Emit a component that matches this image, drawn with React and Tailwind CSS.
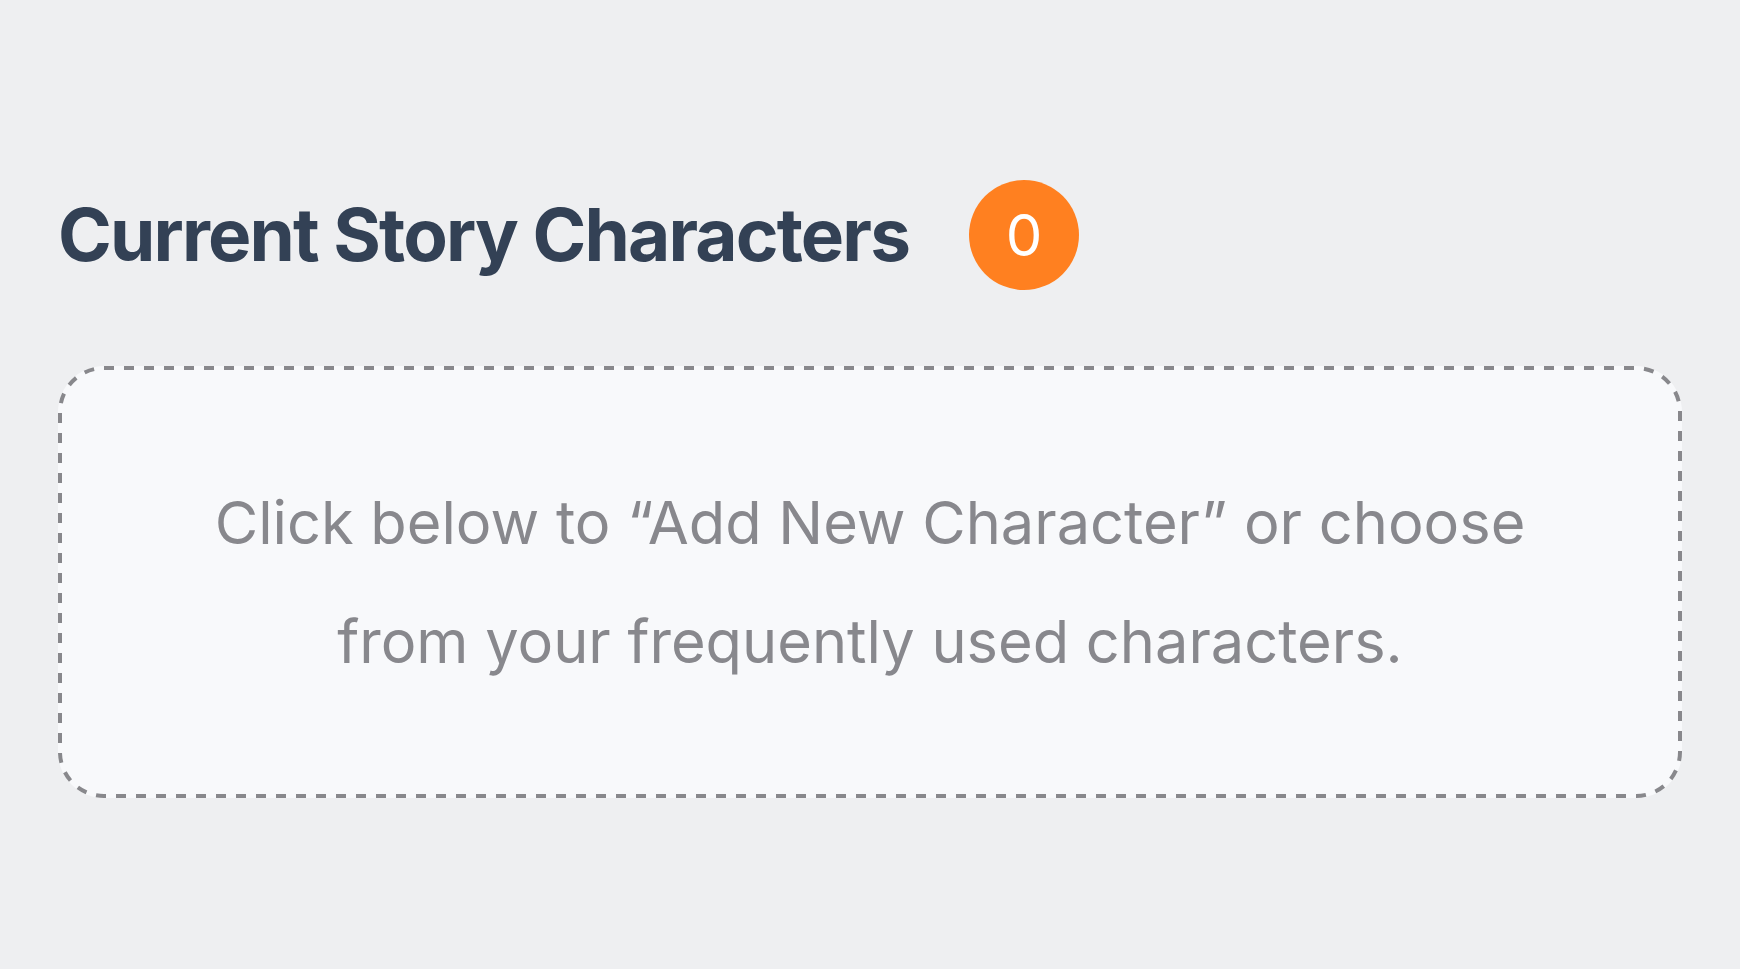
import React from 'react';

const App = () => {
    const count = 0;

    return (
        <div className="min-h-screen bg-[#eeeff1] px-[58px] pt-[180px] font-['Inter','Noto_Sans',sans-serif]">
            {/* header row */}
            <div className="flex items-center gap-[60px] h-[110px]">
                <h1 className="text-[72.8px] leading-none font-bold tracking-tight text-[#334155]">
                    Current Story Characters
                </h1>
                <span className="flex items-center justify-center w-[110px] h-[110px] rounded-full bg-[#ff8020] text-white text-[58px] leading-none">
                    {count}
                </span>
            </div>

            {/* empty state */}
            <div className="relative mt-[76px] h-[432px] flex items-center justify-center rounded-[46px] bg-[#f8f9fb]">
                {/* dashed outline, 10/10 dashes */}
                <svg className="absolute inset-0 w-full h-full pointer-events-none" fill="none">
                    <rect
                        x="2"
                        y="2"
                        rx="44"
                        className="[width:calc(100%-4px)] [height:calc(100%-4px)]"
                        stroke="#88888c"
                        strokeWidth="4"
                        strokeDasharray="10 10"
                    />
                </svg>
                <p className="text-center text-[59.5px] leading-[2] text-[#88888d]">
                    Click below to “Add New Character” or choose
                    <br />
                    from your frequently used characters.
                </p>
            </div>
        </div>
    );
};

export default App;
